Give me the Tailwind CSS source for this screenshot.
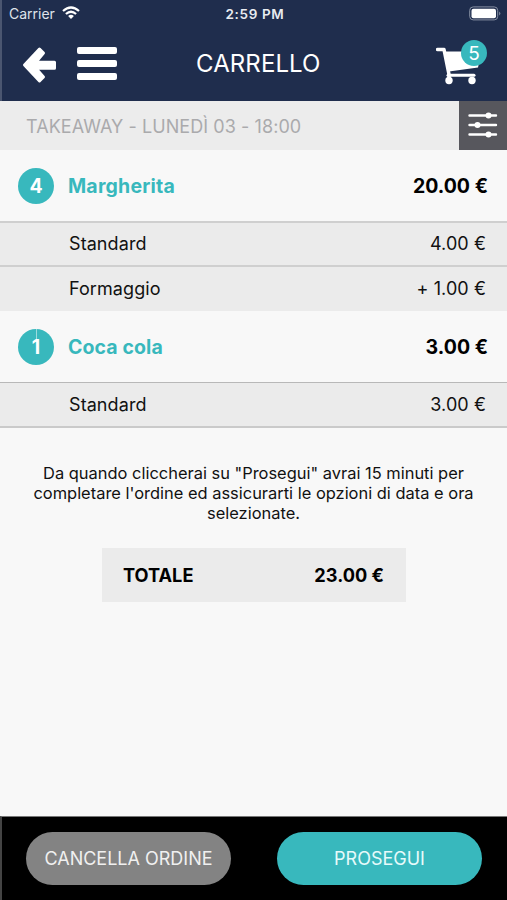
<!DOCTYPE html>
<html lang="it">
<head>
<meta charset="utf-8">
<title>Carrello</title>
<script src="https://cdn.jsdelivr.net/npm/@tailwindcss/browser@4"></script>
</head>
<body class="bg-[#f8f8f8]">
<div class="w-[507px] h-[900px] flex flex-col overflow-hidden bg-[#f8f8f8] font-['Inter',sans-serif] text-[#111] whitespace-nowrap">
  <header class="h-[101px] shrink-0 bg-[#1f2d4d] text-white border-l-2 border-[#4b5670]">
    <div class="h-7 grid grid-cols-3 items-center pl-[7px] pr-[6px] text-[13px]">
      <div class="flex items-center gap-[7px] text-[#dfe3ea]">
        <span class="text-[14px] leading-4">Carrier</span>
        <svg class="w-[18px] h-[14px] -mt-[2px]" viewBox="0 0 18 14" fill="none" stroke="#fff" stroke-width="2.2"><path d="M1 5Q9-2 17 5M3.900 8Q9 3.500 14.100 8"/><path d="M6.100 10.100Q9 7.500 11.900 10.100L9 13Z" fill="#fff" stroke="none"/></svg>
      </div>
      <span class="text-center font-semibold text-[#e8ebf0] text-[13.500px] tracking-[0.65px]">2:59 PM</span>
      <svg class="w-[32px] h-[15px] justify-self-end -mt-[2px]" viewBox="0 0 32 15"><rect x=".7" y=".9" width="28" height="13" rx="3.500" fill="none" stroke="#8790a3"/><rect x="2.500" y="2.700" width="24.500" height="9.500" rx="2" fill="#fff"/><path d="M30.200 5.500Q32.500 7.500 30.200 9.500Z" fill="#8790a3"/></svg>
    </div>
    <div class="h-[71px] flex items-center pl-5 relative">
      <svg class="w-[36px] h-[38px] mt-[3px]" viewBox="0 0 36 38" fill="#fff" stroke="#fff" stroke-width="3" stroke-linejoin="round"><path d="M2.500 19L17.500 3L21.500 7L13.800 16.300H32.500V22.200H13.800L21.500 31L17.500 35Z"/></svg>
      <div class="ml-[19px] w-[40px] h-[33px] flex flex-col justify-between">
        <div class="h-[7px] bg-white rounded-[2px]"></div><div class="h-[7px] bg-white rounded-[2px]"></div><div class="h-[7px] bg-white rounded-[2px]"></div>
      </div>
      <h1 class="ml-[79px] w-[126px] text-[24px] tracking-[0.1px]">CARRELLO</h1>
      <svg class="ml-[114px] w-[52px] h-[46px]" viewBox="0 0 52 46"><path d="M1.500 8.500H8L13 33.500V37" fill="none" stroke="#fff" stroke-width="3.500" stroke-linecap="round" stroke-linejoin="round"/><path d="M9.500 10.500H45L42 26.500L13 30.500Z" fill="#fff"/><path d="M12 34.300H38" stroke="#fff" stroke-width="3" stroke-linecap="round"/><circle cx="13" cy="39.500" r="3.700" fill="#fff"/><circle cx="36" cy="39.500" r="3.700" fill="#fff"/></svg>
      <span class="absolute left-[459px] top-[12px] size-[26px] rounded-full bg-[#38b8bd] text-[19px] leading-[27px] text-center">5</span>
    </div>
  </header>
  <div class="h-[49px] shrink-0 bg-[#ececec] flex items-center">
    <span class="pl-[26px] pt-[2px] flex-1 text-[18px] tracking-[0.07px] text-[#aaaaac]">TAKEAWAY - LUNEDÌ 03 - 18:00</span>
    <div class="w-[48px] h-[49px] bg-[#57575d] flex items-center justify-center pb-[2px]">
      <svg class="w-[30px] h-[26px]" viewBox="0 0 30 26" stroke="#fff" stroke-width="2.400" stroke-linecap="round" fill="#fff"><path d="M1.500 3.500H28M1.500 13H28M1.500 22.500H28"/><g stroke="none"><circle cx="20.500" cy="3.500" r="3"/><circle cx="9.500" cy="13" r="3"/><circle cx="20.500" cy="22.500" r="3"/></g></svg>
    </div>
  </div>
  <main class="flex-1">
    <div class="h-[71px] flex items-center pl-[18px] pr-[19px] font-bold text-[19.500px]">
      <span class="size-9 rounded-full bg-[#38b8bd] text-white text-center leading-9 mr-[14px]">4</span>
      <span class="flex-1 pt-[2px] text-[#38b8bd] tracking-[0.2px]">Margherita</span><span class="pt-[2px] text-black">20.00 €</span>
    </div>
    <div class="h-[44px] flex items-center justify-between pl-[69px] pr-[21px] pb-px text-[18px] tracking-[0.08px] bg-[#ebebeb] border-t-2 border-[#cfcfcf]"><span>Standard</span><span>4.00 €</span></div>
    <div class="h-[46px] flex items-center justify-between pl-[69px] pr-[21px] pb-[2px] text-[18px] tracking-[0.08px] bg-[#ebebeb] border-t-2 border-[#cfcfcf]"><span>Formaggio</span><span>+ 1.00 €</span></div>
    <div class="h-[71px] flex items-center pl-[18px] pr-[19px] font-bold text-[19.500px]">
      <span class="size-9 rounded-full bg-[#38b8bd] text-white text-center leading-9 mr-[14px] relative">1<i class="absolute left-[18px] top-0 w-px h-[11px] bg-white/50"></i></span>
      <span class="flex-1 pt-[2px] text-[#38b8bd] tracking-[0.1px]">Coca cola</span><span class="pt-[2px] text-black">3.00 €</span>
    </div>
    <div class="h-[46px] flex items-center justify-between pl-[69px] pr-[21px] text-[18px] tracking-[0.08px] bg-[#ebebeb] border-t border-b-2 border-t-[#b8b8b8] border-b-[#cacaca]"><span>Standard</span><span>3.00 €</span></div>
    <p class="mt-[35px] text-center text-[16.450px] leading-[20px]"><span>Da quando cliccherai su "Prosegui" avrai 15 minuti per</span><br><span>completare l'ordine ed assicurarti le opzioni di data e ora</span><br><span>selezionate.</span></p>
    <div class="mt-[25px] ml-[102px] w-[304px] h-[54px] bg-[#ebebeb] flex items-center justify-between pl-[21px] pr-[22px] pt-px text-[18.200px] font-bold text-black"><span>TOTALE</span><span>23.00 €</span></div>
  </main>
  <footer class="h-[84px] shrink-0 bg-black border-t border-l-2 border-t-[#777] border-l-[#444] flex pt-[15px] pl-6 text-[18px]">
    <button class="w-[205px] h-[53px] rounded-full bg-[#838383] text-[#f0f0f0]">CANCELLA ORDINE</button>
    <button class="ml-[46px] w-[205px] h-[53px] rounded-full bg-[#38b8bd] text-[#e6fafa]">PROSEGUI</button>
  </footer>
</div>
</body>
</html>
